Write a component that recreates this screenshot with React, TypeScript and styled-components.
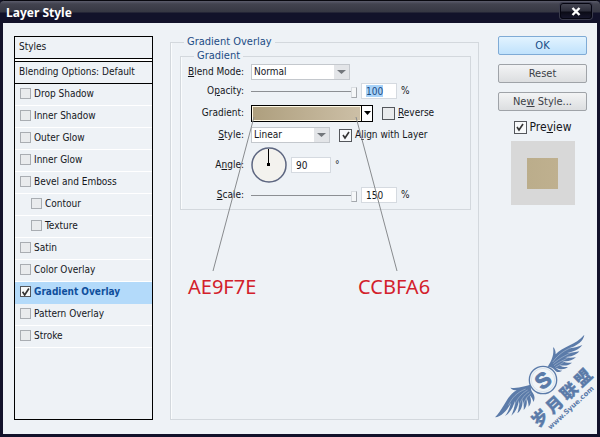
import React from "react";
import styled, { createGlobalStyle, css } from "styled-components";

const Global = createGlobalStyle`
  * { box-sizing: border-box; }
  html, body, #root { height: 100%; margin: 0; }
  body {
    background: #12122a;
    color: #15171c;
    font: 10px/14px "DejaVu Sans Condensed", "DejaVu Sans", sans-serif;
  }
  button, input, select { font: inherit; color: inherit; margin: 0; }
`;

const Dialog = styled.main`
  position: relative;
  display: flex;
  flex-direction: column;
  min-height: 100%;
  border: 3px solid #12122a;
  border-top: 0;
  background: #eef2f6;
`;

const TitleBar = styled.header`
  display: flex;
  align-items: center;
  justify-content: space-between;
  height: 23px;
  margin: 0 -3px;
  padding: 0 5px 0 6px;
  border-top: 1px solid #08080f;
  border-radius: 4px 4px 0 0;
  background: linear-gradient(#5b5c6c 0, #42434f 3px, #363743 11px, #12122a 12px, #12122a 100%);
`;

const Title = styled.h1`
  margin: 0;
  padding-top: 2px;
  color: #fff;
  font: bold 12px/16px "Noto Sans", "DejaVu Sans Condensed", sans-serif;
`;

const CloseButton = styled.button`
  display: flex;
  align-items: center;
  justify-content: center;
  align-self: flex-start;
  width: 32px;
  height: 16px;
  margin: 2px 3px 0 0;
  padding: 0;
  border: 1px solid #050510;
  border-radius: 3px;
  background: linear-gradient(#444552 0, #2c2d3a 7px, #0b0b16 8px, #15152a 100%);
  box-shadow: 0 0 0 1px #3a3b4c;
`;

const Content = styled.div`
  display: flex;
  flex: 1;
  padding: 13px 10px 14px 11px;
`;

const StyleList = styled.section`
  flex: 0 0 139px;
  border: 1px solid #000;
`;

const ListHeading = styled.h2<{ $ruled?: boolean }>`
  height: 22px;
  margin: 0;
  padding: 3px 4px;
  border-bottom: 1px solid #000;
  font: inherit;
  white-space: nowrap;
  ${(p) => p.$ruled && css`
    height: 25px;
    border-bottom: 0;
    box-shadow: inset 0 -1px #000, inset 0 -3px #fff, inset 0 -4px #000;
  `}
`;

const Items = styled.ul`
  margin: 0;
  padding: 0;
  list-style: none;
`;

const Item = styled.li<{ $nested?: boolean; $selected?: boolean }>`
  display: flex;
  align-items: center;
  height: 22px;
  padding: 0 5px 2px ${(p) => (p.$nested ? 16 : 5)}px;
  border-bottom: 1px solid #fff;
  ${(p) => p.$selected && css`
    background: #b3dafa;
    border-bottom-color: #b3dafa;
    color: #0f4f9c;
    font-weight: bold;
  `}
`;

const CheckLabel = styled.label<{ $large?: boolean }>`
  display: inline-flex;
  align-items: center;
  gap: 3px;
  white-space: nowrap;
  ${(p) => p.$large && css`font-size: 12px;`}
`;

const TickBox = styled.input<{ $size: number; $strong?: boolean }>`
  appearance: none;
  flex: none;
  width: ${(p) => p.$size}px;
  height: ${(p) => p.$size}px;
  border: 1px solid ${(p) => (p.$strong ? "#54575c" : "#a9adb2")};
  background: #e9ebed;
  &:checked {
    border-color: #54575c;
    background: #f7f9fa url("data:image/svg+xml,%3Csvg xmlns='http://www.w3.org/2000/svg' viewBox='0 0 10 10'%3E%3Cpath d='M2 5l2 3 4-6' fill='none' stroke='%23333' stroke-width='1.6'/%3E%3C/svg%3E") center / 10px 10px no-repeat;
  }
`;

const Group = styled.fieldset<{ $inner?: boolean }>`
  min-width: 0;
  margin: 0;
  padding: 0;
  border: 1px solid #d3d8dd;
  box-shadow: inset 1px 0 #fafcfd;
  ${(p) => p.$inner ? css`
    margin: 0 7px 0 9px;
    padding-bottom: 4px;
  ` : css`
    flex: 1;
    margin: -1px 19px 0 17px;
  `}
`;

const Legend = styled.legend`
  margin-left: 13px;
  padding: 0 3px;
  color: #1c4c85;
  font-size: 11px;
`;

const Form = styled.div`
  display: grid;
  grid-template-columns: 63px 1fr;
  grid-template-rows: 18px 20px 24px 20px 40px 20px;
  column-gap: 7px;
  align-items: center;
`;

const FieldLabel = styled.label`
  justify-self: end;
  white-space: nowrap;
`;

const Field = styled.div<{ $gap?: number }>`
  display: flex;
  align-items: center;
  gap: ${(p) => p.$gap ?? 4}px;
`;

const SelectWrap = styled.span<{ $width: number }>`
  display: grid;
  align-items: center;
  width: ${(p) => p.$width}px;
  > * { grid-area: 1 / 1; }
  > svg { justify-self: end; pointer-events: none; }
`;

const Select = styled.select`
  appearance: none;
  width: 100%;
  height: 16px;
  padding: 0 2px;
  border: 1px solid #c4c8cd;
  border-radius: 0;
  background: #fff;
  line-height: 14px;
`;

const Slider = styled.input`
  appearance: none;
  width: 106px;
  height: 14px;
  background: linear-gradient(#8c8f93, #8c8f93) left center / 102px 1px no-repeat;
  &::-webkit-slider-thumb {
    appearance: none;
    width: 6px;
    height: 11px;
    margin-top: 2px;
    border: 1px solid #a4a8ad;
    border-top-color: #d9dde1;
    border-left-color: #d9dde1;
    background: #f5f7f8;
  }
`;

const NumberBox = styled.input<{ $width: number; $marked?: boolean }>`
  width: ${(p) => p.$width}px;
  height: 16px;
  padding: 0 4px;
  border: 1px solid #d5dae0;
  background: ${(p) => p.$marked ? "linear-gradient(#a9d3f8, #a9d3f8) 4px center / 17px 12px no-repeat, #fff" : "#fff"};
  ${(p) => p.$marked && css`color: #174b85;`}
`;

const GradientPicker = styled.button`
  display: flex;
  width: 122px;
  height: 17px;
  padding: 0;
  border: 1px solid #000;
  background: #fff;
`;

const Ramp = styled.span`
  flex: 1;
  border: 1px solid #fff8e4;
  background: linear-gradient(90deg, #ae9f7e, #ccbfa6);
`;

const RampArrow = styled.span`
  display: flex;
  align-items: center;
  justify-content: center;
  width: 11px;
  border-left: 1px solid #000;
`;

const Side = styled.aside`
  display: flex;
  flex: 0 0 89px;
  flex-direction: column;
  align-items: center;
`;

const PushButton = styled.button<{ $primary?: boolean }>`
  width: 100%;
  height: 19px;
  margin-bottom: 9px;
  padding: 0;
  border: 1px solid ${(p) => (p.$primary ? "#7fabd6" : "#9fa3a8")};
  border-radius: 2px;
  background: ${(p) => p.$primary ? "linear-gradient(#e2f3ff, #c0e2fc)" : "linear-gradient(#f3f4f5, #dcdee0)"};
  color: ${(p) => (p.$primary ? "#174b85" : "#3c3f46")};
  font-size: 11px;
  line-height: 16px;
`;

const Swatch = styled.div`
  display: grid;
  place-items: center;
  width: 64px;
  height: 64px;
  margin-top: 7px;
  background: #d8d8d8;
  &::after {
    content: "";
    width: 31px;
    height: 31px;
    background: linear-gradient(90deg, #bbad8b, #bfb08f);
  }
`;

const Leaders = styled.svg`
  position: absolute;
  left: 185px;
  top: 114px;
  pointer-events: none;
`;

const Callout = styled.span<{ $x: number }>`
  position: absolute;
  left: ${(p) => p.$x}px;
  top: 273px;
  color: #d3202a;
  font: 20px/28px "Noto Sans", sans-serif;
`;

const Watermark = styled.svg`
  position: absolute;
  right: 0;
  bottom: 0;
  pointer-events: none;
`;

const styles = [
  { name: "Drop Shadow" }, { name: "Inner Shadow" }, { name: "Outer Glow" },
  { name: "Inner Glow" }, { name: "Bevel and Emboss" },
  { name: "Contour", nested: true }, { name: "Texture", nested: true },
  { name: "Satin" }, { name: "Color Overlay" },
  { name: "Gradient Overlay", selected: true },
  { name: "Pattern Overlay" }, { name: "Stroke" },
];

function Dropdown({ id, value, width }: { id: string; value: string; width: number }) {
  return (
    <SelectWrap $width={width}>
      <Select id={id} defaultValue={value}><option>{value}</option></Select>
      <svg width="16" height="16" aria-hidden="true">
        <path d="M0 1h15v14H0z" fill="#e3e5e8" />
        <path d="M3 6h9l-4.500 4z" fill="#73777c" />
      </svg>
    </SelectWrap>
  );
}

function WingedLogo() {
  return (
    <Watermark width="104" height="104" viewBox="0 0 312 312" role="img" aria-label="岁月联盟 www.Syue.com">
      <g fill="#5b7ba9">
        <path d="M164 110C177 91 184 72 180 51C187 57 188 65 188 73C208 49 248 46 274 14C272 33 251 47 230 55C246 53 258 49 268 45C257 60 238 66 222 69C236 69 250 66 259 64C248 77 229 82 216 81C228 85 239 83 249 82C235 95 217 96 207 92C216 98 228 99 237 98C225 109 208 108 199 104C206 111 217 112 225 111C213 121 197 118 188 113C193 119 201 122 208 122C198 128 191 127 187 122C181 114 173 110 164 110Z" />
        <path d="M116 163C99 168 77 176 52 173C58 180 65 181 71 181C43 194 34 234 6 262C27 259 44 239 54 218C50 234 44 248 36 258C53 248 61 229 66 213C66 229 60 246 55 257C69 246 76 227 77 211C79 225 77 239 73 250C87 239 90 221 88 207C92 219 93 229 92 240C103 229 103 214 99 202C104 211 107 220 107 230C117 218 114 205 110 196C116 202 120 209 121 216C127 207 125 196 119 188C113 180 112 171 116 163Z" />
      </g>
      <g fill="none" stroke="#eef2f6" strokeWidth="1">
        <path d="M179 96C198 71 215 61 238 51M181 101C201 83 218 77 233 68M183 107C202 93 213 91 225 83M187 112L212 97" />
        <path d="M98 177C72 187 57 203 46 226M104 180C84 191 70 208 61 234M109 185C91 196 82 213 75 234M113 191C101 200 94 212 91 225" />
      </g>
      <circle cx="150" cy="150" r="41" fill="#f1f5f8" stroke="#5b7ba9" strokeWidth="4" />
      <circle cx="150" cy="150" r="35" fill="none" stroke="#a8bbd1" />
      <g fill="#5b7ba9" fontWeight="bold" textAnchor="middle">
        <text transform="translate(150 150) rotate(-38)" y="23" fontSize="64" stroke="#5b7ba9" strokeWidth="3" fontFamily="Liberation Sans, sans-serif">S</text>
        <g transform="translate(206 204) rotate(-43)">
          <g fontFamily="Noto Sans CJK SC, sans-serif" fontSize="50" fontWeight="900" stroke="#5b7ba9" strokeWidth="1">
            {["岁", "月", "联", "盟"].map((c, i) => (
              <text key={c} x={i * 59 - 88} y="18">{c}</text>
            ))}
          </g>
          <text y="47" fontFamily="DejaVu Sans, sans-serif" fontSize="21">www.Syue.com</text>
        </g>
      </g>
    </Watermark>
  );
}

export default function App() {
  return (
    <>
      <Global />
      <Dialog>
        <TitleBar>
          <Title>Layer Style</Title>
          <CloseButton aria-label="Close">
            <svg width="10" height="9" viewBox="0 0 10 9"><path d="M1.500 1l7 7M8.500 1l-7 7" stroke="#fff" strokeWidth="2.400" /></svg>
          </CloseButton>
        </TitleBar>
        <Content>
          <StyleList>
            <ListHeading $ruled>Styles</ListHeading>
            <ListHeading>Blending Options: Default</ListHeading>
            <Items>
              {styles.map((s) => (
                <Item key={s.name} $nested={s.nested} $selected={s.selected}>
                  <CheckLabel><TickBox type="checkbox" $size={11} defaultChecked={s.selected} />{s.name}</CheckLabel>
                </Item>
              ))}
            </Items>
          </StyleList>

          <Group>
            <Legend>Gradient Overlay</Legend>
            <Group $inner>
              <Legend>Gradient</Legend>
              <Form>
                <FieldLabel htmlFor="blend"><u>B</u>lend Mode:</FieldLabel>
                <Field><Dropdown id="blend" value="Normal" width={99} /></Field>

                <FieldLabel htmlFor="opacity">O<u>p</u>acity:</FieldLabel>
                <Field>
                  <Slider type="range" aria-label="Opacity slider" defaultValue={100} />
                  <NumberBox id="opacity" $width={36} $marked defaultValue="100" />%
                </Field>

                <FieldLabel htmlFor="gradient">Gradient:</FieldLabel>
                <Field $gap={9}>
                  <GradientPicker id="gradient">
                    <Ramp />
                    <RampArrow><svg width="7" height="4"><path d="M0 0h7L3.500 4z" /></svg></RampArrow>
                  </GradientPicker>
                  <CheckLabel><TickBox type="checkbox" $size={13} $strong /><span><u>R</u>everse</span></CheckLabel>
                </Field>

                <FieldLabel htmlFor="style"><u>S</u>tyle:</FieldLabel>
                <Field $gap={9}>
                  <Dropdown id="style" value="Linear" width={79} />
                  <CheckLabel><TickBox type="checkbox" $size={13} defaultChecked /><span>A<u>l</u>ign with Layer</span></CheckLabel>
                </Field>

                <FieldLabel htmlFor="angle">A<u>n</u>gle:</FieldLabel>
                <Field>
                  <svg width="36" height="36" viewBox="0 0 36 36" aria-hidden="true">
                    <circle cx="18" cy="18" r="17" fill="#f3f2ee" stroke="#5d6680" strokeWidth="1.500" />
                    <path d="M17.500 2v16" stroke="#000" />
                    <path d="M16 16h3v3h-3z" />
                  </svg>
                  <NumberBox id="angle" $width={40} defaultValue="90" />°
                </Field>

                <FieldLabel htmlFor="scale"><u>S</u>cale:</FieldLabel>
                <Field>
                  <Slider type="range" aria-label="Scale slider" defaultValue={100} />
                  <NumberBox id="scale" $width={36} defaultValue="150" />%
                </Field>
              </Form>
            </Group>
          </Group>

          <Side>
            <PushButton $primary>OK</PushButton>
            <PushButton>Reset</PushButton>
            <PushButton>Ne<u>w</u> Style...</PushButton>
            <CheckLabel $large><TickBox type="checkbox" $size={13} defaultChecked /><span>Pre<u>v</u>iew</span></CheckLabel>
            <Swatch />
          </Side>
        </Content>
        <Leaders width="220" height="160"><path d="M66 3L25 157M168 3l41 154" stroke="#888b8e" fill="none" /></Leaders>
        <Callout $x={185}>AE9F7E</Callout>
        <Callout $x={355}>CCBFA6</Callout>
        <WingedLogo />
      </Dialog>
    </>
  );
}
